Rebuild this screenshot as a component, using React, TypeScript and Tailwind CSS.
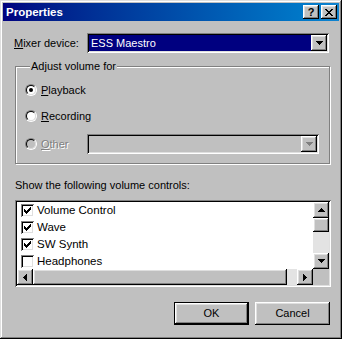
import React from "react";

const raised =
  "shadow-[inset_-1px_-1px_0_#000,inset_1px_1px_0_#fff,inset_-2px_-2px_0_#808080,inset_2px_2px_0_#dfdfdf]";
const sunken =
  "shadow-[inset_1px_1px_0_#808080,inset_-1px_-1px_0_#fff,inset_2px_2px_0_#000,inset_-2px_-2px_0_#dfdfdf]";

function Tri({ dir, color = "#000" }: { dir: "up" | "down" | "left" | "right"; color?: string }) {
  const vertical = dir === "up" || dir === "down";
  const w = vertical ? 7 : 4;
  const h = vertical ? 4 : 7;
  const d =
    dir === "down"
      ? "M0 0h7v1h-7zM1 1h5v1h-5zM2 2h3v1h-3zM3 3h1v1h-1z"
      : dir === "up"
      ? "M3 0h1v1h-1zM2 1h3v1h-3zM1 2h5v1h-5zM0 3h7v1h-7z"
      : dir === "right"
      ? "M0 0h1v7h-1zM1 1h1v5h-1zM2 2h1v3h-1zM3 3h1v1h-1z"
      : "M3 0h1v7h-1zM2 1h1v5h-1zM1 2h1v3h-1zM0 3h1v1h-1z";
  return (
    <svg width={w} height={h} viewBox={`0 0 ${w} ${h}`} shapeRendering="crispEdges">
      <path d={d} fill={color} />
    </svg>
  );
}

function ArrowBtn({ dir, className = "" }: { dir: "up" | "down" | "left" | "right"; className?: string }) {
  return (
    <div className={`w-[16px] h-[16px] bg-[#c0c0c0] flex items-center justify-center ${raised} ${className}`}>
      <Tri dir={dir} />
    </div>
  );
}

function Radio({ checked, disabled }: { checked?: boolean; disabled?: boolean }) {
  return (
    <div className="w-[12px] h-[12px] rounded-full border border-t-[#808080] border-l-[#808080] border-b-white border-r-white shrink-0">
      <div
        className={`w-full h-full rounded-full border border-t-black border-l-black border-b-[#dfdfdf] border-r-[#dfdfdf] flex items-center justify-center ${
          disabled ? "bg-[#c0c0c0]" : "bg-white"
        }`}
      >
        {checked && <div className="w-[4px] h-[4px] rounded-full bg-black" />}
      </div>
    </div>
  );
}

function Check({ checked }: { checked?: boolean }) {
  return (
    <div className={`w-[13px] h-[13px] bg-white flex items-center justify-center shrink-0 ${sunken}`}>
      {checked && (
        <svg width="7" height="7" viewBox="0 0 7 7" shapeRendering="crispEdges">
          <path
            d="M6 0h1v1h-1zM5 1h2v1h-2zM0 2h1v1h-1zM4 2h3v1h-3zM0 3h2v1h-2zM3 3h3v1h-3zM0 4h5v1h-5zM1 5h3v1h-3zM2 6h1v1h-1z"
            fill="#000"
          />
        </svg>
      )}
    </div>
  );
}

export default function App() {
  const items: [string, boolean][] = [
    ["Volume Control", true],
    ["Wave", true],
    ["SW Synth", true],
    ["Headphones", false],
  ];
  return (
    <div
      className="w-[342px] h-[339px] bg-[#c0c0c0] pt-[3px] px-[3px] text-[11px] leading-[13px] text-black shadow-[inset_-1px_-1px_0_#000,inset_1px_1px_0_#dfdfdf,inset_-2px_-2px_0_#808080,inset_2px_2px_0_#fff] overflow-hidden"
      style={{ fontFamily: '"Liberation Sans", Arial, sans-serif' }}
    >
      {/* Title bar */}
      <div className="h-[18px] bg-gradient-to-r from-[#000080] to-[#1084d0] flex items-center pl-[3px] pr-[2px]">
        <span className="text-white font-bold text-[11.5px] leading-[14px]">Properties</span>
        <div className="ml-auto flex gap-[2px]">
          <div className={`w-[16px] h-[14px] bg-[#c0c0c0] flex items-center justify-center font-bold text-[11px] leading-[11px] ${raised}`}>
            ?
          </div>
          <div className={`w-[16px] h-[14px] bg-[#c0c0c0] flex items-center justify-center ${raised}`}>
            <svg width="8" height="7" viewBox="0 0 8 7" shapeRendering="crispEdges">
              <path
                d="M0 0h2v1h-2zM6 0h2v1h-2zM1 1h2v1h-2zM5 1h2v1h-2zM2 2h4v1h-4zM3 3h2v1h-2zM2 4h4v1h-4zM1 5h2v1h-2zM5 5h2v1h-2zM0 6h2v1h-2zM6 6h2v1h-2z"
                fill="#000"
              />
            </svg>
          </div>
        </div>
      </div>

      {/* Mixer device row */}
      <div className="mt-[12px] flex items-center pl-[11px]">
        <span className="w-[73px]">
          <span className="underline underline-offset-1">M</span>ixer device:
        </span>
        <div className={`w-[242px] h-[20px] bg-white p-[2px] flex ${sunken}`}>
          <div className="flex-1 bg-[#000080] text-white flex items-center pl-[2px]">ESS Maestro</div>
          <ArrowBtn dir="down" />
        </div>
      </div>

      {/* Group box */}
      <fieldset className="mt-[7px] ml-[12px] w-[315px] border border-[#808080] shadow-[inset_1px_1px_0_#fff,1px_1px_0_#fff] pl-[9px] pb-[9px]">
        <legend className="ml-[5px] px-[1px] bg-[#c0c0c0] leading-[13px]">Adjust volume for</legend>
        <div className="mt-[7px] flex flex-col gap-[6px]">
          <div className="h-[20px] flex items-center gap-[4px]">
            <Radio checked />
            <span>
              <span className="underline underline-offset-1">P</span>layback
            </span>
          </div>
          <div className="h-[20px] flex items-center gap-[4px]">
            <Radio />
            <span>
              <span className="underline underline-offset-1">R</span>ecording
            </span>
          </div>
          <div className="h-[20px] mt-[2px] flex items-center">
            <div className="w-[62px] flex items-center gap-[4px]">
              <Radio disabled />
              <span className="text-[#808080] [text-shadow:1px_1px_0_#fff]">
                <span className="underline underline-offset-1">O</span>ther
              </span>
            </div>
            <div className={`w-[232px] h-[20px] bg-[#c0c0c0] p-[2px] flex justify-end ${sunken}`}>
              <div className={`w-[16px] h-[16px] bg-[#c0c0c0] flex items-center justify-center ${raised}`}>
                <Tri dir="down" color="#808080" />
              </div>
            </div>
          </div>
        </div>
      </fieldset>

      {/* List label */}
      <div className="mt-[15px] pl-[12px]">Show the following volume controls:</div>

      {/* Listbox */}
      <div className={`mt-[8px] ml-[12px] w-[316px] h-[87px] bg-white p-[2px] ${sunken}`}>
        <div className="grid grid-cols-[1fr_16px] grid-rows-[67px_16px] h-full">
          <div className="overflow-hidden flex flex-col">
            {items.map(([label, c]) => (
              <div key={label} className="h-[17px] shrink-0 flex items-center pl-[4px] gap-[3px]">
                <Check checked={c} />
                <span className="text-[11.5px]">{label}</span>
              </div>
            ))}
          </div>
          <div className="flex flex-col bg-[#e3e3e3]">
            <ArrowBtn dir="up" />
            <div className={`h-[14px] bg-[#c0c0c0] ${raised}`} />
            <div className="flex-1" />
            <ArrowBtn dir="down" />
          </div>
          <div className="flex bg-[#e3e3e3]">
            <ArrowBtn dir="left" />
            <div className={`w-[254px] h-[16px] bg-[#c0c0c0] ${raised}`} />
            <div className="flex-1" />
            <ArrowBtn dir="right" />
          </div>
          <div className="bg-[#c0c0c0]" />
        </div>
      </div>

      {/* Buttons */}
      <div className="mt-[15px] flex justify-end gap-[6px] pr-[9px]">
        <div className="w-[75px] h-[23px] border border-black">
          <div className={`w-full h-full bg-[#c0c0c0] flex items-center justify-center ${raised}`}>OK</div>
        </div>
        <div className={`w-[75px] h-[23px] bg-[#c0c0c0] flex items-center justify-center ${raised}`}>Cancel</div>
      </div>
    </div>
  );
}
